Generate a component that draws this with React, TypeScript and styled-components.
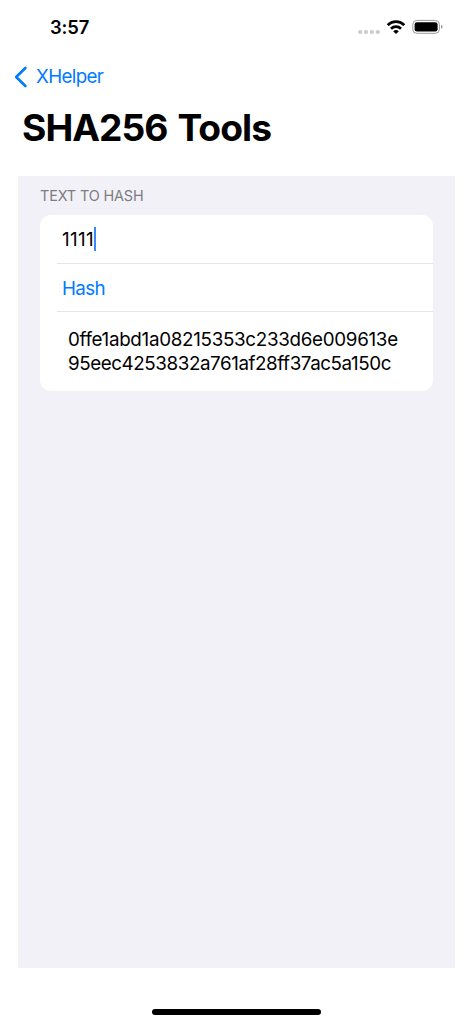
import styled, { createGlobalStyle } from "styled-components";
import { useState } from "react";

const GlobalStyle = createGlobalStyle`
  * {
    box-sizing: border-box;
  }
  body {
    margin: 0;
    background: #fff;
    color: #000;
    font-family: Inter, "Liberation Sans", sans-serif;
  }
`;

const Screen = styled.div`
  height: 1024px;
  display: flex;
  flex-direction: column;
  overflow: hidden;
`;

const StatusBar = styled.header`
  height: 54px;
  display: flex;
  justify-content: space-between;
  padding: 0 30px 0 50px;
`;

const Clock = styled.div`
  font-size: 18.4px;
  font-weight: 600;
  line-height: 22px;
  letter-spacing: -0.15px;
  padding-top: 16px;
`;

const StatusIcons = styled.svg`
  width: 85px;
  height: 54px;
`;

const BackButton = styled.button`
  height: 45px;
  display: flex;
  align-items: center;
  gap: 8px;
  padding: 0 0 0 14px;
  border: 0;
  background: none;
  color: #007aff;
  font-family: inherit;
  font-size: 18.8px;
  letter-spacing: -0.65px;
  cursor: pointer;
`;

const Title = styled.h1`
  height: 77px;
  margin: 0;
  padding: 6px 22px 0;
  font-size: 37.2px;
  font-weight: 700;
  line-height: 46px;
  letter-spacing: -0.95px;
  word-spacing: 2px;
  white-space: nowrap;
`;

const Form = styled.main`
  height: 792px;
  margin: 0 18px;
  padding: 10px 22px 0;
  background: #f2f1f7;
`;

const SectionHeader = styled.h2`
  height: 29px;
  margin: 0;
  color: #7c7c80;
  font-size: 14.4px;
  font-weight: 400;
  line-height: 19px;
  letter-spacing: -0.12px;
  text-transform: uppercase;
`;

const Card = styled.section`
  border-radius: 11px;
  background: #fff;
`;

const Row = styled.div<{ $last?: boolean }>`
  height: ${({ $last }) => ($last ? "79px" : "48.5px")};
  margin-left: 17px;
  padding: ${({ $last }) => ($last ? "16px 0 0 11px" : "2px 0 0 5px")};
  display: flex;
  align-items: ${({ $last }) => ($last ? "flex-start" : "center")};
  border-bottom: ${({ $last }) => ($last ? "0" : "1px solid #e7e7e9")};
  font-size: 18.8px;
`;

const Value = styled.span`
  letter-spacing: 0.35px;
`;

const Caret = styled.span`
  width: 2px;
  height: 24px;
  margin-top: -1px;
  background: #3d87f7;
`;

const HashButton = styled.button`
  padding: 0;
  border: 0;
  background: none;
  color: #007aff;
  font: inherit;
  letter-spacing: -0.6px;
  cursor: pointer;
`;

const Digest = styled.p`
  margin: 0;
  line-height: 24px;
`;

const DigestLine = styled.span<{ $spacing: number }>`
  display: block;
  letter-spacing: ${({ $spacing }) => $spacing}px;
  white-space: nowrap;
`;

const HomeIndicator = styled.div`
  width: 169px;
  height: 6px;
  margin: 41px auto 0;
  border-radius: 3px;
  background: #000;
`;

const hash = "0ffe1abd1a08215353c233d6e009613e95eec4253832a761af28ff37ac5a150c";

function App() {
  const [digest, setDigest] = useState(hash);

  return (
    <Screen>
      <GlobalStyle />
      <StatusBar>
        <Clock>3:57</Clock>
        <StatusIcons viewBox="358 0 85 54" aria-hidden="true">
          <g fill="#cbcbcd">
            <circle cx="360.2" cy="32" r="2.1" />
            <circle cx="366" cy="32" r="2.1" />
            <circle cx="371.9" cy="32" r="2.1" />
            <circle cx="377.8" cy="32" r="2.1" />
          </g>
          <g fill="none" stroke="#000" strokeWidth="2.7">
            <path d="M387.7 25.1a11.8 11.8 0 0 1 16.6 0" />
            <path d="M391 28.7a7.1 7.1 0 0 1 10 0" />
          </g>
          <path d="M393.2 31.2a4.1 4.1 0 0 1 5.6 0L396 34z" />
          <rect x="412.8" y="20.4" width="26.6" height="12.9" rx="4" fill="none" stroke="#9b9b9b" />
          <rect x="414.6" y="22.2" width="23" height="9.4" rx="2.4" />
          <path d="M441 24.8q1.6.5 1.6 2t-1.6 2z" fill="#9b9b9b" />
        </StatusIcons>
      </StatusBar>
      <BackButton>
        <svg width="14" height="22" viewBox="0 0 14 22" fill="none" stroke="currentColor" strokeWidth="2.6" strokeLinecap="round" strokeLinejoin="round">
          <path d="M11.4 2 2.2 11l9.2 9" />
        </svg>
        <span>XHelper</span>
      </BackButton>
      <Title>SHA256 Tools</Title>
      <Form>
        <SectionHeader>Text to hash</SectionHeader>
        <Card>
          <Row>
            <Value>1111</Value>
            <Caret />
          </Row>
          <Row>
            <HashButton onClick={() => setDigest(hash)}>Hash</HashButton>
          </Row>
          <Row $last>
            <Digest>
              <DigestLine $spacing={-0.3}>{digest.slice(0, 32)}</DigestLine>
              <DigestLine $spacing={-0.42}>{digest.slice(32)}</DigestLine>
            </Digest>
          </Row>
        </Card>
      </Form>
      <HomeIndicator />
    </Screen>
  );
}

export default App;
